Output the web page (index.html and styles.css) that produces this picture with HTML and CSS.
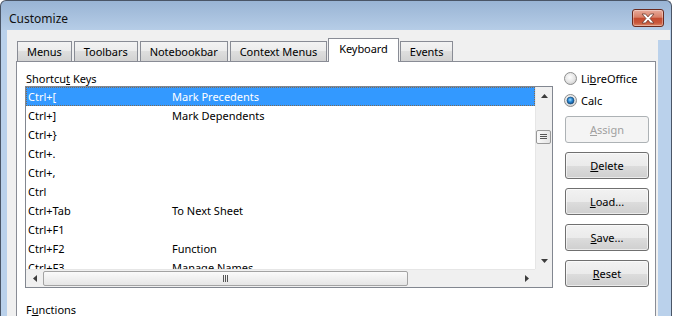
FILE: index.html
```html
<!DOCTYPE html>
<html>
<head>
    <title>Customize</title>
    <meta charset="utf-8" />
    <link rel="stylesheet" href="styles.css">
</head>
<body>
    <div class="window">
        <div class="titlebar">
            <span class="title">Customize</span>
            <div class="close-btn">
                <svg width="14" height="11" viewBox="0 0 14 11"><path d="M1 1h3.6L7 3.9 9.4 1H13L9 5.5 13 10H9.4L7 7.1 4.6 10H1l4-4.5z" fill="#fff" stroke="#6b3a2e" stroke-width="0.8" /></svg>
            </div>
        </div>
        <div class="client">
            <div class="dialog">
                <div class="tabs">
                    <div class="tab">Menus</div>
                    <div class="tab">Toolbars</div>
                    <div class="tab">Notebookbar</div>
                    <div class="tab">Context Menus</div>
                    <div class="tab tab-active">Keyboard</div>
                    <div class="tab">Events</div>
                </div>
                <div class="tab-panel">
                    <div class="keys-col">
                        <div class="label">Shortcu<u>t</u> Keys</div>
                        <div class="listbox">
                            <div class="list-main">
                                <div class="rows">
                                    <div class="row row-selected"><span class="key">Ctrl+[</span><span>Mark Precedents</span></div>
                                    <div class="row"><span class="key">Ctrl+]</span><span>Mark Dependents</span></div>
                                    <div class="row"><span class="key">Ctrl+}</span></div>
                                    <div class="row"><span class="key">Ctrl+.</span></div>
                                    <div class="row"><span class="key">Ctrl+,</span></div>
                                    <div class="row"><span class="key">Ctrl</span></div>
                                    <div class="row"><span class="key">Ctrl+Tab</span><span>To Next Sheet</span></div>
                                    <div class="row"><span class="key">Ctrl+F1</span></div>
                                    <div class="row"><span class="key">Ctrl+F2</span><span>Function</span></div>
                                    <div class="row"><span class="key">Ctrl+F3</span><span>Manage Names</span></div>
                                </div>
                                <div class="vscroll">
                                    <div class="sb-btn"><svg width="7" height="4" viewBox="0 0 7 4"><path d="M0 4L3.5 0 7 4z" fill="#3c3c3c" /></svg></div>
                                    <div class="vthumb">
                                        <svg width="7" height="6" viewBox="0 0 7 6"><path d="M0 .5h7M0 2.5h7M0 4.5h7" stroke="#555" stroke-width="1" /></svg>
                                    </div>
                                    <div class="sb-space"></div>
                                    <div class="sb-btn"><svg width="7" height="4" viewBox="0 0 7 4"><path d="M0 0h7L3.5 4z" fill="#3c3c3c" /></svg></div>
                                </div>
                            </div>
                            <div class="hscroll-row">
                                <div class="hscroll">
                                    <div class="sb-btn sb-btn-h"><svg width="4" height="7" viewBox="0 0 4 7"><path d="M4 0v7L0 3.5z" fill="#3c3c3c" /></svg></div>
                                    <div class="hthumb">
                                        <svg width="6" height="7" viewBox="0 0 6 7"><path d="M.5 0v7M2.5 0v7M4.5 0v7" stroke="#555" stroke-width="1" /></svg>
                                    </div>
                                    <div class="sb-space"></div>
                                    <div class="sb-btn sb-btn-h"><svg width="4" height="7" viewBox="0 0 4 7"><path d="M0 0v7L4 3.5z" fill="#3c3c3c" /></svg></div>
                                </div>
                                <div class="corner"></div>
                            </div>
                        </div>
                        <div class="label label-functions">F<u>u</u>nctions</div>
                    </div>
                    <div class="side-col">
                        <div class="radio">
                            <svg width="13" height="13" viewBox="0 0 13 13">
                                <defs>
                                    <radialGradient id="ring" cx="45%" cy="40%" r="65%"><stop offset="0" stop-color="#fdfdfd" /><stop offset="0.6" stop-color="#e6e6e6" /><stop offset="1" stop-color="#c9c9c9" /></radialGradient>
                                </defs>
                                <circle cx="6.5" cy="6.5" r="6" fill="url(#ring)" stroke="#8e8f8f" />
                            </svg>
                            <span>Li<u>b</u>reOffice</span>
                        </div>
                        <div class="radio">
                            <svg width="13" height="13" viewBox="0 0 13 13">
                                <defs>
                                    <radialGradient id="ring2" cx="45%" cy="40%" r="65%"><stop offset="0" stop-color="#fdfdfd" /><stop offset="0.6" stop-color="#e6e6e6" /><stop offset="1" stop-color="#c9c9c9" /></radialGradient>
                                    <radialGradient id="dot" cx="45%" cy="40%" r="60%"><stop offset="0" stop-color="#9fe0ff" /><stop offset="0.5" stop-color="#2d8ad6" /><stop offset="1" stop-color="#0f4f8e" /></radialGradient>
                                </defs>
                                <circle cx="6.5" cy="6.5" r="6" fill="url(#ring2)" stroke="#8e8f8f" />
                                <circle cx="6.5" cy="6.5" r="3.5" fill="url(#dot)" stroke="#1d4a72" stroke-width="0.7" />
                            </svg>
                            <span>Calc</span>
                        </div>
                        <div class="btn btn-disabled"><span><u>A</u>ssign</span></div>
                        <div class="btn"><span><u>D</u>elete</span></div>
                        <div class="btn"><span><u>L</u>oad...</span></div>
                        <div class="btn"><span><u>S</u>ave...</span></div>
                        <div class="btn"><span><u>R</u>eset</span></div>
                    </div>
                </div>
            </div>
            <div class="frame-strip"></div>
        </div>
    </div>
</body>
</html>
```

FILE: styles.css
```css
*{
    box-sizing:border-box;
}
body{
    margin:0;
    background:#fff;
    font-family:"Noto Sans","Open Sans",sans-serif;
    font-size:11px;
    color:#000;
    overflow:hidden;
}
.window{
    width:672px;
    height:316px;
    overflow:hidden;
    border:1px solid #4a5566;
    border-bottom:none;
    border-radius:6px 6px 0 0;
    background:linear-gradient(#99b4d4 0, #b6cde7 29px, #bad1eb 29px, #bad1eb);
    display:flex;
    flex-direction:column;
}
.titlebar{
    flex:none;
    height:29px;
    display:flex;
    justify-content:space-between;
    align-items:flex-start;
    padding:0 7px 0 8px;
}
.title{
    margin-top:10px;
    line-height:16px;
    font-size:12px;
    color:#111;
}
.close-btn{
    width:32px;
    height:18px;
    margin-top:8px;
    border:1px solid #6a2a1e;
    border-radius:3px;
    background:linear-gradient(#e8ab9b, #d88068 45%, #c44b2f 52%, #c9573b 80%, #dd8a6a);
    box-shadow:inset 0 0 0 1px rgba(255,255,255,0.35);
    display:flex;
    align-items:center;
    justify-content:center;
}
.client{
    flex:none;
    height:300px;
    margin:0 1px 0 6px;
    background:#f0f0f0;
    display:flex;
}
.dialog{
    flex:1;
    padding-top:8px;
}
.frame-strip{
    width:12px;
    margin-top:10px;
    background:#bad1eb;
}
.tabs{
    display:flex;
    align-items:flex-end;
    height:23px;
    margin-left:10px;
    position:relative;
    z-index:1;
}
.tab{
    height:20px;
    padding:2px 9px 0;
    margin-right:2px;
    border:1px solid #898c95;
    border-bottom:none;
    background:linear-gradient(#f3f3f3, #ebebeb 50%, #dedede 50%, #d2d2d2);
    line-height:16px;
    letter-spacing:-0.05px;
    white-space:nowrap;
}
.tab-active{
    height:24px;
    margin:0 1px -1px -1px;
    padding:2px 10px 0;
    background:#fff;
}
.tab-panel{
    height:270px;
    margin:0 2px 0 9px;
    border:1px solid #898c95;
    background:#fff;
    display:flex;
}
.keys-col{
    padding-left:8px;
}
.label{
    margin-top:9px;
    line-height:15px;
    padding-left:1px;
}
.label-functions{
    margin-top:14px;
}
.listbox{
    width:528px;
    height:202px;
    border:1px solid #828790;
    display:flex;
    flex-direction:column;
}
.list-main{
    flex:1;
    min-height:0;
    display:flex;
}
.rows{
    flex:1;
    overflow:hidden;
}
.row{
    height:19px;
    line-height:19px;
    padding-left:2px;
    display:flex;
    white-space:nowrap;
}
.row .key{
    width:144px;
}
.row-selected{
    background:#3399ff;
    color:#fff;
    outline:1px dotted #7d6a55;
    outline-offset:-1px;
}
.vscroll{
    width:17px;
    background:#f0f0f0;
    border-left:1px solid #e6e6e6;
    display:flex;
    flex-direction:column;
}
.sb-btn{
    height:17px;
    display:flex;
    align-items:center;
    justify-content:center;
}
.sb-btn-h{
    width:17px;
    height:auto;
}
.sb-space{
    flex:1;
}
.vthumb{
    height:14px;
    margin:26px 1px 0 0;
    border:1px solid #999;
    border-radius:2px;
    background:linear-gradient(to right, #fafafa, #e4e4e4);
    display:flex;
    align-items:center;
    justify-content:center;
}
.hscroll-row{
    height:18px;
    display:flex;
}
.hscroll{
    flex:1;
    display:flex;
    background:#f0f0f0;
    border-top:1px solid #e6e6e6;
}
.hthumb{
    width:365px;
    margin:1px 0;
    border:1px solid #a3a3a3;
    border-radius:2px;
    background:linear-gradient(#fafafa, #e6e6e6);
    display:flex;
    align-items:center;
    justify-content:center;
}
.corner{
    width:17px;
    background:#f0f0f0;
}
.side-col{
    width:86px;
    margin-left:11px;
    padding-top:5px;
}
.radio{
    height:22px;
    display:flex;
    align-items:center;
}
.radio svg{
    margin-right:4px;
}
.btn{
    width:84px;
    height:27px;
    margin:9px 0 0 1px;
    border:1px solid #707070;
    border-radius:3px;
    background:linear-gradient(#f2f2f2, #ebebeb 50%, #dddddd 50%, #cfcfcf);
    box-shadow:inset 0 0 0 1px rgba(255,255,255,0.6);
    display:flex;
    align-items:center;
    justify-content:center;
}
.radio + .btn{
    margin-top:5px;
}
.btn-disabled{
    border-color:#adb2b5;
    background:#f4f4f4;
    box-shadow:none;
    color:#a0a0a0;
}
```
